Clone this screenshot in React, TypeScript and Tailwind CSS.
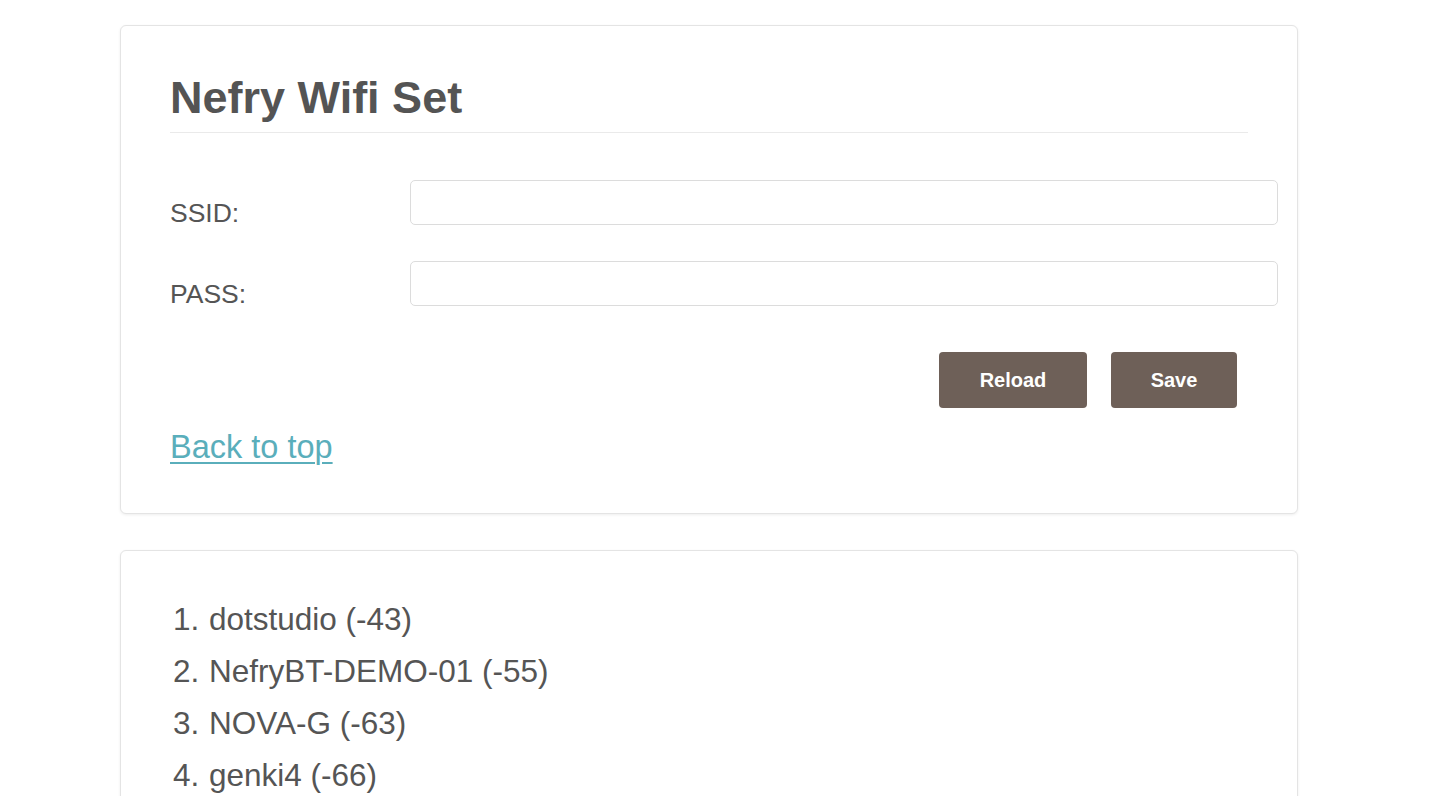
import React from "react";

const font = { fontFamily: '"Liberation Sans", Arial, Helvetica, sans-serif' };

export default function App() {
  const nets = [
    "dotstudio (-43)",
    "NefryBT-DEMO-01 (-55)",
    "NOVA-G (-63)",
    "genki4 (-66)",
  ];
  return (
    <div className="min-h-screen bg-white text-[#555555]" style={font}>
      <div className="pt-[25px] pl-[120px]">
        <div className="w-[1178px] rounded-[6px] border border-[#e4e4e4] bg-white px-[49px] pt-[50px] pb-[48px] shadow-[0_1px_3px_rgba(0,0,0,0.07)]">
          <h1 className="border-b border-[#eaeaea] pb-[12px] text-[45px] font-bold leading-[44px] text-[#545454]">
            Nefry Wifi Set
          </h1>
          <div className="mt-[47px] flex flex-col gap-[35px]">
            <div className="flex items-start">
              <label className="w-[240px] shrink-0 pt-[20px] text-[26.5px] leading-[26px]">SSID:</label>
              <input
                type="text"
                className="h-[45px] w-[868px] shrink-0 rounded-[5px] border border-[#dcdcdc] bg-white px-3 outline-none"
              />
            </div>
            <div className="flex items-start">
              <label className="w-[240px] shrink-0 pt-[20px] text-[26.5px] leading-[26px]">PASS:</label>
              <input
                type="password"
                className="h-[45px] w-[868px] shrink-0 rounded-[5px] border border-[#dcdcdc] bg-white px-3 outline-none"
              />
            </div>
          </div>
          <div className="mt-[45px] flex justify-end gap-[24px] pr-[11px]">
            <button className="h-[56px] w-[148px] rounded-[4px] bg-[#6e6058] text-[20px] font-bold text-white">
              Reload
            </button>
            <button className="h-[56px] w-[126px] rounded-[4px] bg-[#6e6058] text-[20px] font-bold text-white">
              Save
            </button>
          </div>
          <div className="mt-[24px]">
            <a href="#" className="text-[32.5px] leading-[31px] text-[#5aaebb] underline underline-offset-[4px] decoration-[2px]">
              Back to top
            </a>
          </div>
        </div>
        <div className="mt-[36px] w-[1178px] rounded-[6px] border border-[#e4e4e4] bg-white px-[49px] pt-[42px] pb-[50px] shadow-[0_1px_3px_rgba(0,0,0,0.07)]">
          <ol>
            {nets.map((n, i) => (
              <li key={n} className="flex text-[31.5px] leading-[52px]">
                <span className="w-[39px] shrink-0 pl-[3px]">{i + 1}.</span>
                <span>{n}</span>
              </li>
            ))}
          </ol>
        </div>
      </div>
    </div>
  );
}
